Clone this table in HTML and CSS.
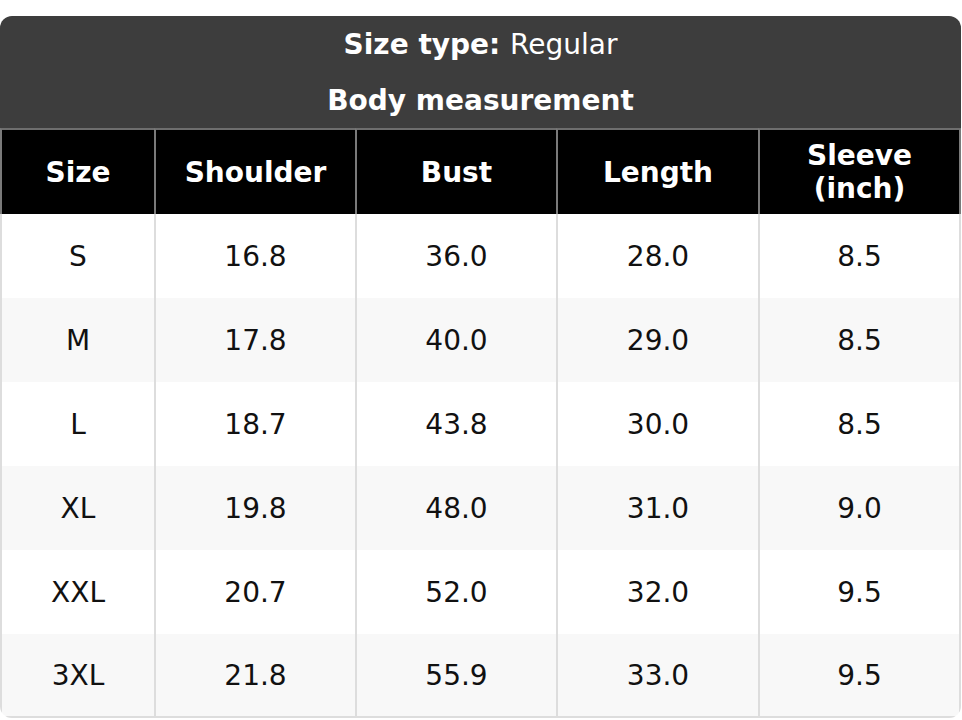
FILE: index.html
```html
<!DOCTYPE html>
<html lang="en">
<head>
<meta charset="utf-8">
<title>Size chart</title>
<link rel="stylesheet" href="styles.css">
</head>
<body>
<div class="chart">
  <table class="size-table">
    <colgroup>
      <col class="c1"><col class="c2"><col class="c3"><col class="c4"><col class="c5">
    </colgroup>
    <thead>
      <tr class="title-row"><th colspan="5"><strong>Size type:</strong> <span class="regular">Regular</span></th></tr>
      <tr class="title-row"><th colspan="5">Body measurement</th></tr>
      <tr class="col-head">
        <th>Size</th><th>Shoulder</th><th>Bust</th><th>Length</th><th>Sleeve (inch)</th>
      </tr>
    </thead>
    <tbody>
      <tr><td>S</td><td>16.8</td><td>36.0</td><td>28.0</td><td>8.5</td></tr>
      <tr><td>M</td><td>17.8</td><td>40.0</td><td>29.0</td><td>8.5</td></tr>
      <tr><td>L</td><td>18.7</td><td>43.8</td><td>30.0</td><td>8.5</td></tr>
      <tr><td>XL</td><td>19.8</td><td>48.0</td><td>31.0</td><td>9.0</td></tr>
      <tr><td>XXL</td><td>20.7</td><td>52.0</td><td>32.0</td><td>9.5</td></tr>
      <tr><td>3XL</td><td>21.8</td><td>55.9</td><td>33.0</td><td>9.5</td></tr>
    </tbody>
  </table>
</div>
</body>
</html>
```

FILE: styles.css
```css
html, body {
  margin: 0;
  padding: 0;
  background: #ffffff;
}

body {
  padding-top: 16px;
  font-family: "DejaVu Sans", "Liberation Sans", sans-serif;
  font-size: 28px;
  color: #111111;
}

.chart {
  width: 961px;
  border-radius: 12px;
  overflow: hidden;
}

.size-table {
  width: 100%;
  border-collapse: separate;
  border-spacing: 0;
  table-layout: fixed;
}

.c1 { width: 154px; }
.c2 { width: 201px; }
.c3 { width: 201px; }
.c4 { width: 202px; }
.c5 { width: 203px; }

.size-table th,
.size-table td {
  padding: 0 4px;
  text-align: center;
  vertical-align: middle;
  box-sizing: border-box;
}

.title-row th {
  height: 56px;
  background: #3d3d3d;
  color: #ffffff;
  font-weight: bold;
}

.title-row .regular {
  font-weight: normal;
}

.col-head th {
  height: 86px;
  background: #000000;
  color: #ffffff;
  font-weight: bold;
  border-top: 2px solid #6e6e6e;
  border-left: 2px solid #7a7a7a;
}

.col-head th:last-child {
  border-right: 2px solid #7a7a7a;
}

.size-table td {
  height: 84px;
  font-weight: normal;
  border-left: 2px solid #dddddd;
}

.size-table td:last-child {
  border-right: 2px solid #dddddd;
}

.size-table tbody tr:nth-child(even) td {
  background: #f8f8f8;
}

.size-table tbody tr:last-child td {
  border-bottom: 2px solid #dddddd;
}
```
